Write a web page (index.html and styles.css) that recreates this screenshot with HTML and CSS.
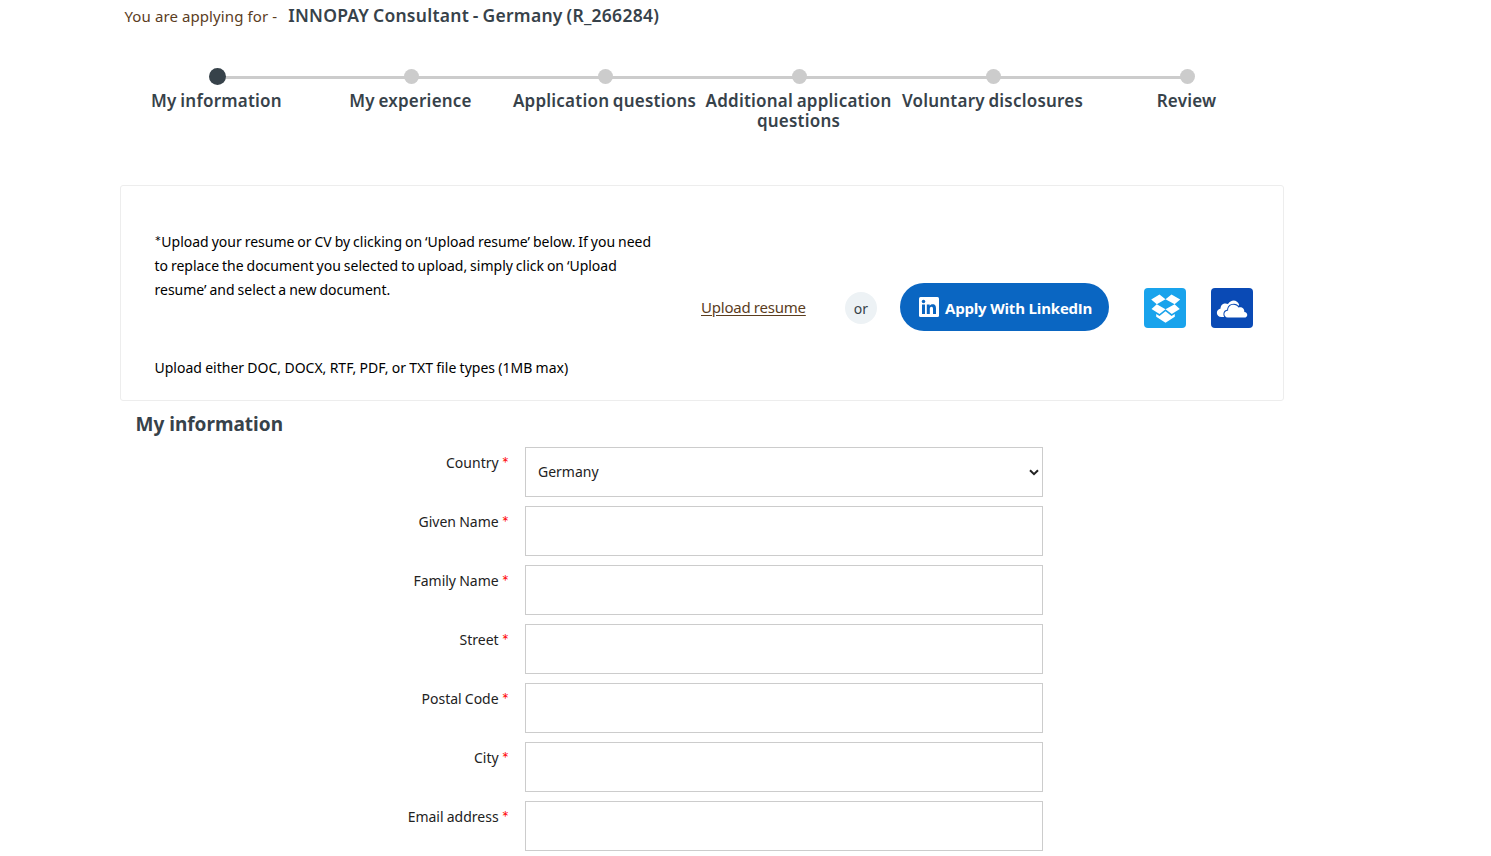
FILE: index.html
```html
<!DOCTYPE html>
<html lang="en">
<head>
    <meta charset="UTF-8">
    <meta name="viewport" content="width=device-width, initial-scale=1.0">
    <title>My information</title>
    <link rel="stylesheet" href="styles.css">
</head>
<body>
    <div class="container">
        <div class="job-header">
            <span class="job-label">You are applying for -</span>
            <h1 class="job-title">INNOPAY Consultant - Germany (R_266284)</h1>
        </div>

        <ol class="steps">
            <li class="step active"><span class="dot"></span><span class="step-name">My information</span></li>
            <li class="step"><span class="dot"></span><span class="step-name">My experience</span></li>
            <li class="step"><span class="dot"></span><span class="step-name">Application questions</span></li>
            <li class="step"><span class="dot"></span><span class="step-name">Additional application questions</span></li>
            <li class="step"><span class="dot"></span><span class="step-name">Voluntary disclosures</span></li>
            <li class="step"><span class="dot"></span><span class="step-name">Review</span></li>
        </ol>

        <div class="upload-box">
            <div class="upload-text">
                <p class="upload-help"><span class="star">*</span>Upload your resume or CV by clicking on ‘Upload resume’ below. If you need<br>to replace the document you selected to upload, simply click on ‘Upload<br>resume’ and select a new document.</p>
                <p class="upload-types">Upload either DOC, DOCX, RTF, PDF, or TXT file types (1MB max)</p>
            </div>
            <div class="upload-actions">
                <a href="#" class="upload-link">Upload resume</a>
                <span class="or">or</span>
                <button type="button" class="linkedin-btn">
                    <svg width="20" height="20" viewBox="0 0 20 20">
                        <rect width="20" height="20" rx="1.5" fill="#fff"/>
                        <circle cx="4.5" cy="4.6" r="1.75" fill="#0a66c2"/>
                        <path fill="#0a66c2" d="M3 7.6h3V17H3zM7.8 7.6h2.9v1.3c.5-.9 1.5-1.6 2.9-1.6 2.8 0 3.4 1.9 3.4 4.3V17h-3v-4.9c0-1.2-.2-2.3-1.5-2.3-1.4 0-1.7 1.1-1.7 2.3V17h-3z"/>
                    </svg>
                    <span>Apply With LinkedIn</span>
                </button>
                <a href="#" class="cloud dropbox" aria-label="Dropbox">
                    <svg width="42" height="40" viewBox="0 0 42 40" fill="#fff">
                        <path d="M15.5 6.5l6 4.700-8.700 5-5.600-4.800zM27.500 6.500l8.700 4.900-5.600 4.800-9.100-5zM7.500 21l5.300-4.800 8.700 5.100-6 4.700zM30.600 16.200l5.200 4.800-8 5-6.300-4.700z"/>
                        <path d="M21.500 23.200l6 4.900 3.300-2v2.600l-9.300 6-9.300-6v-2.600l3.300 2z"/>
                    </svg>
                </a>
                <a href="#" class="cloud onedrive" aria-label="OneDrive">
                    <svg width="42" height="40" viewBox="0 0 42 40" fill="#fff">
                        <path d="M13 29h-2.500c-6-.5-6-7.600-.9-8.600-.2-4.200 4.300-6.200 7.400-4.300 3-5.400 9.700-4.500 11.200.9L20 24z"/>
                        <path stroke="#0a4ab5" stroke-width="2" paint-order="stroke" d="M16.800 29.600c-4.600-.5-4.600-6.600.3-7.100-.3-6.500 7.900-7.500 10.300-2.900 3.400-1 6.200 1.100 5.900 4.300 4 .3 3.900 5.700 0 5.700z"/>
                    </svg>
                </a>
            </div>
        </div>

        <h2 class="section-title">My information</h2>
        <form class="info-form">
            <div class="row">
                <label for="country">Country <span class="req">*</span></label>
                <div class="select-wrap">
                    <select id="country"><option>Germany</option></select>
                    <svg class="arrow" width="10" height="7" viewBox="0 0 10 7"><path d="M1 1.200l4 4 4-4" fill="none" stroke="#222" stroke-width="2"/></svg>
                </div>
            </div>
            <div class="row">
                <label for="givenName">Given Name <span class="req">*</span></label>
                <input type="text" id="givenName">
            </div>
            <div class="row">
                <label for="familyName">Family Name <span class="req">*</span></label>
                <input type="text" id="familyName">
            </div>
            <div class="row">
                <label for="street">Street <span class="req">*</span></label>
                <input type="text" id="street">
            </div>
            <div class="row">
                <label for="postalCode">Postal Code <span class="req">*</span></label>
                <input type="text" id="postalCode">
            </div>
            <div class="row">
                <label for="city">City <span class="req">*</span></label>
                <input type="text" id="city">
            </div>
            <div class="row">
                <label for="email">Email address <span class="req">*</span></label>
                <input type="text" id="email">
            </div>
        </form>
    </div>
</body>
</html>
```
FILE: styles.css
```css
* {
    box-sizing: border-box;
}
body {
    margin: 0;
    background-color: #fff;
    color: #222;
    font-family: "Noto Sans", sans-serif;
    font-size: 14px;
    overflow-x: hidden;
}
.container {
    width: 1164px;
    margin-left: 120px;
}
.job-header {
    display: flex;
    align-items: baseline;
    gap: 11px;
    height: 68px;
    padding: 3px 0 0 4.5px;
    line-height: 24px;
    white-space: nowrap;
}
.job-label {
    font-size: 15px;
    letter-spacing: .1px;
    color: #5b3d1e;
}
.job-title {
    margin: 0;
    font-size: 17.5px;
    font-weight: 600;
    letter-spacing: .26px;
    word-spacing: -1px;
    color: #37424a;
}
.steps {
    display: flex;
    height: 117px;
    margin: 0;
    padding: 0;
    list-style: none;
}
.step {
    position: relative;
    display: flex;
    flex-direction: column;
    align-items: center;
    width: 194px;
    color: #37424a;
    font-size: 17px;
    font-weight: 600;
    letter-spacing: .22px;
    word-spacing: -1px;
    line-height: 20px;
    text-align: center;
}
.step-name {
    margin-right: 1px;
}
/* connecting line to the next dot */
.step:not(:last-child)::before {
    content: "";
    position: absolute;
    top: 8px;
    left: 97px;
    width: 194px;
    height: 3px;
    background-color: #ccc;
}
.dot {
    position: relative;
    width: 15px;
    height: 15px;
    margin: 1px 0 7px 1px;
    border-radius: 50%;
    background-color: #ccc;
}
.active .dot {
    z-index: 1;
    width: 17px;
    height: 17px;
    margin: 0 0 6px 1px;
    background-color: #37424a;
}
.upload-box {
    display: flex;
    height: 216px;
    border: 1px solid #ededed;
    border-radius: 3px;
}
.upload-text {
    width: 580px;
    padding: 44px 0 0 33.5px;
    color: #000;
    line-height: 24px;
    white-space: nowrap;
}
.upload-text p {
    margin: 0;
}
.upload-help {
    word-spacing: -.7px;
}
.star {
    font-family: Lato, sans-serif;
    font-size: 16px;
    line-height: 1;
}
.upload-text .upload-types {
    margin-top: 54px;
    word-spacing: -.35px;
}
.upload-actions {
    display: flex;
    align-items: center;
    height: 48px;
    margin-top: 97px;
    white-space: nowrap;
}
.upload-link {
    width: 105px;
    margin-right: 39px;
    color: #5b3d1e;
    font-size: 15px;
    letter-spacing: -.22px;
    word-spacing: -.3px;
    text-underline-offset: 2px;
}
.or {
    width: 32px;
    height: 32px;
    margin: 2px 23px 0 0;
    border-radius: 50%;
    background-color: #edf2f5;
    color: #37424a;
    line-height: 33px;
    text-align: center;
}
.linkedin-btn {
    display: flex;
    align-items: center;
    gap: 6px;
    width: 209px;
    height: 48px;
    margin-right: 35px;
    padding: 0 0 0 19px;
    border: none;
    border-radius: 24px;
    background-color: #0a66c2;
    color: #fff;
    font: 700 15px/24px "Open Sans", "Noto Sans", sans-serif;
    letter-spacing: -.2px;
    white-space: nowrap;
    cursor: pointer;
}
.linkedin-btn span {
    margin-top: 2px;
}
.cloud {
    width: 42px;
    height: 40px;
    margin: 2px 25px 0 0;
    border-radius: 4px;
}
.cloud svg {
    display: block;
}
.dropbox {
    background-color: #19a3ec;
}
.onedrive {
    background-color: #0a4ab5;
}
.section-title {
    height: 46px;
    margin: 0;
    padding: 9px 0 0 15.5px;
    color: #37424a;
    font-size: 19px;
    font-weight: 700;
    line-height: 28px;
}
.row {
    display: flex;
    margin-bottom: 9px;
}
.row label {
    width: 389px;
    margin-right: 16px;
    padding-top: 6px;
    line-height: 20px;
    text-align: right;
    white-space: nowrap;
    word-spacing: -.5px;
}
.req {
    color: #f00;
    font-family: Lato, sans-serif;
    font-size: 17px;
    line-height: 1;
    vertical-align: -2px;
}
.row input,
.row select {
    display: block;
    width: 518px;
    height: 50px;
    padding: 0 12px 1px;
    border: 1px solid #ccc;
    border-radius: 0;
    background-color: #fff;
    color: #222;
    font: inherit;
    appearance: none;
}
.select-wrap {
    position: relative;
}
.arrow {
    position: absolute;
    top: 22px;
    right: 4px;
    pointer-events: none;
}
```
